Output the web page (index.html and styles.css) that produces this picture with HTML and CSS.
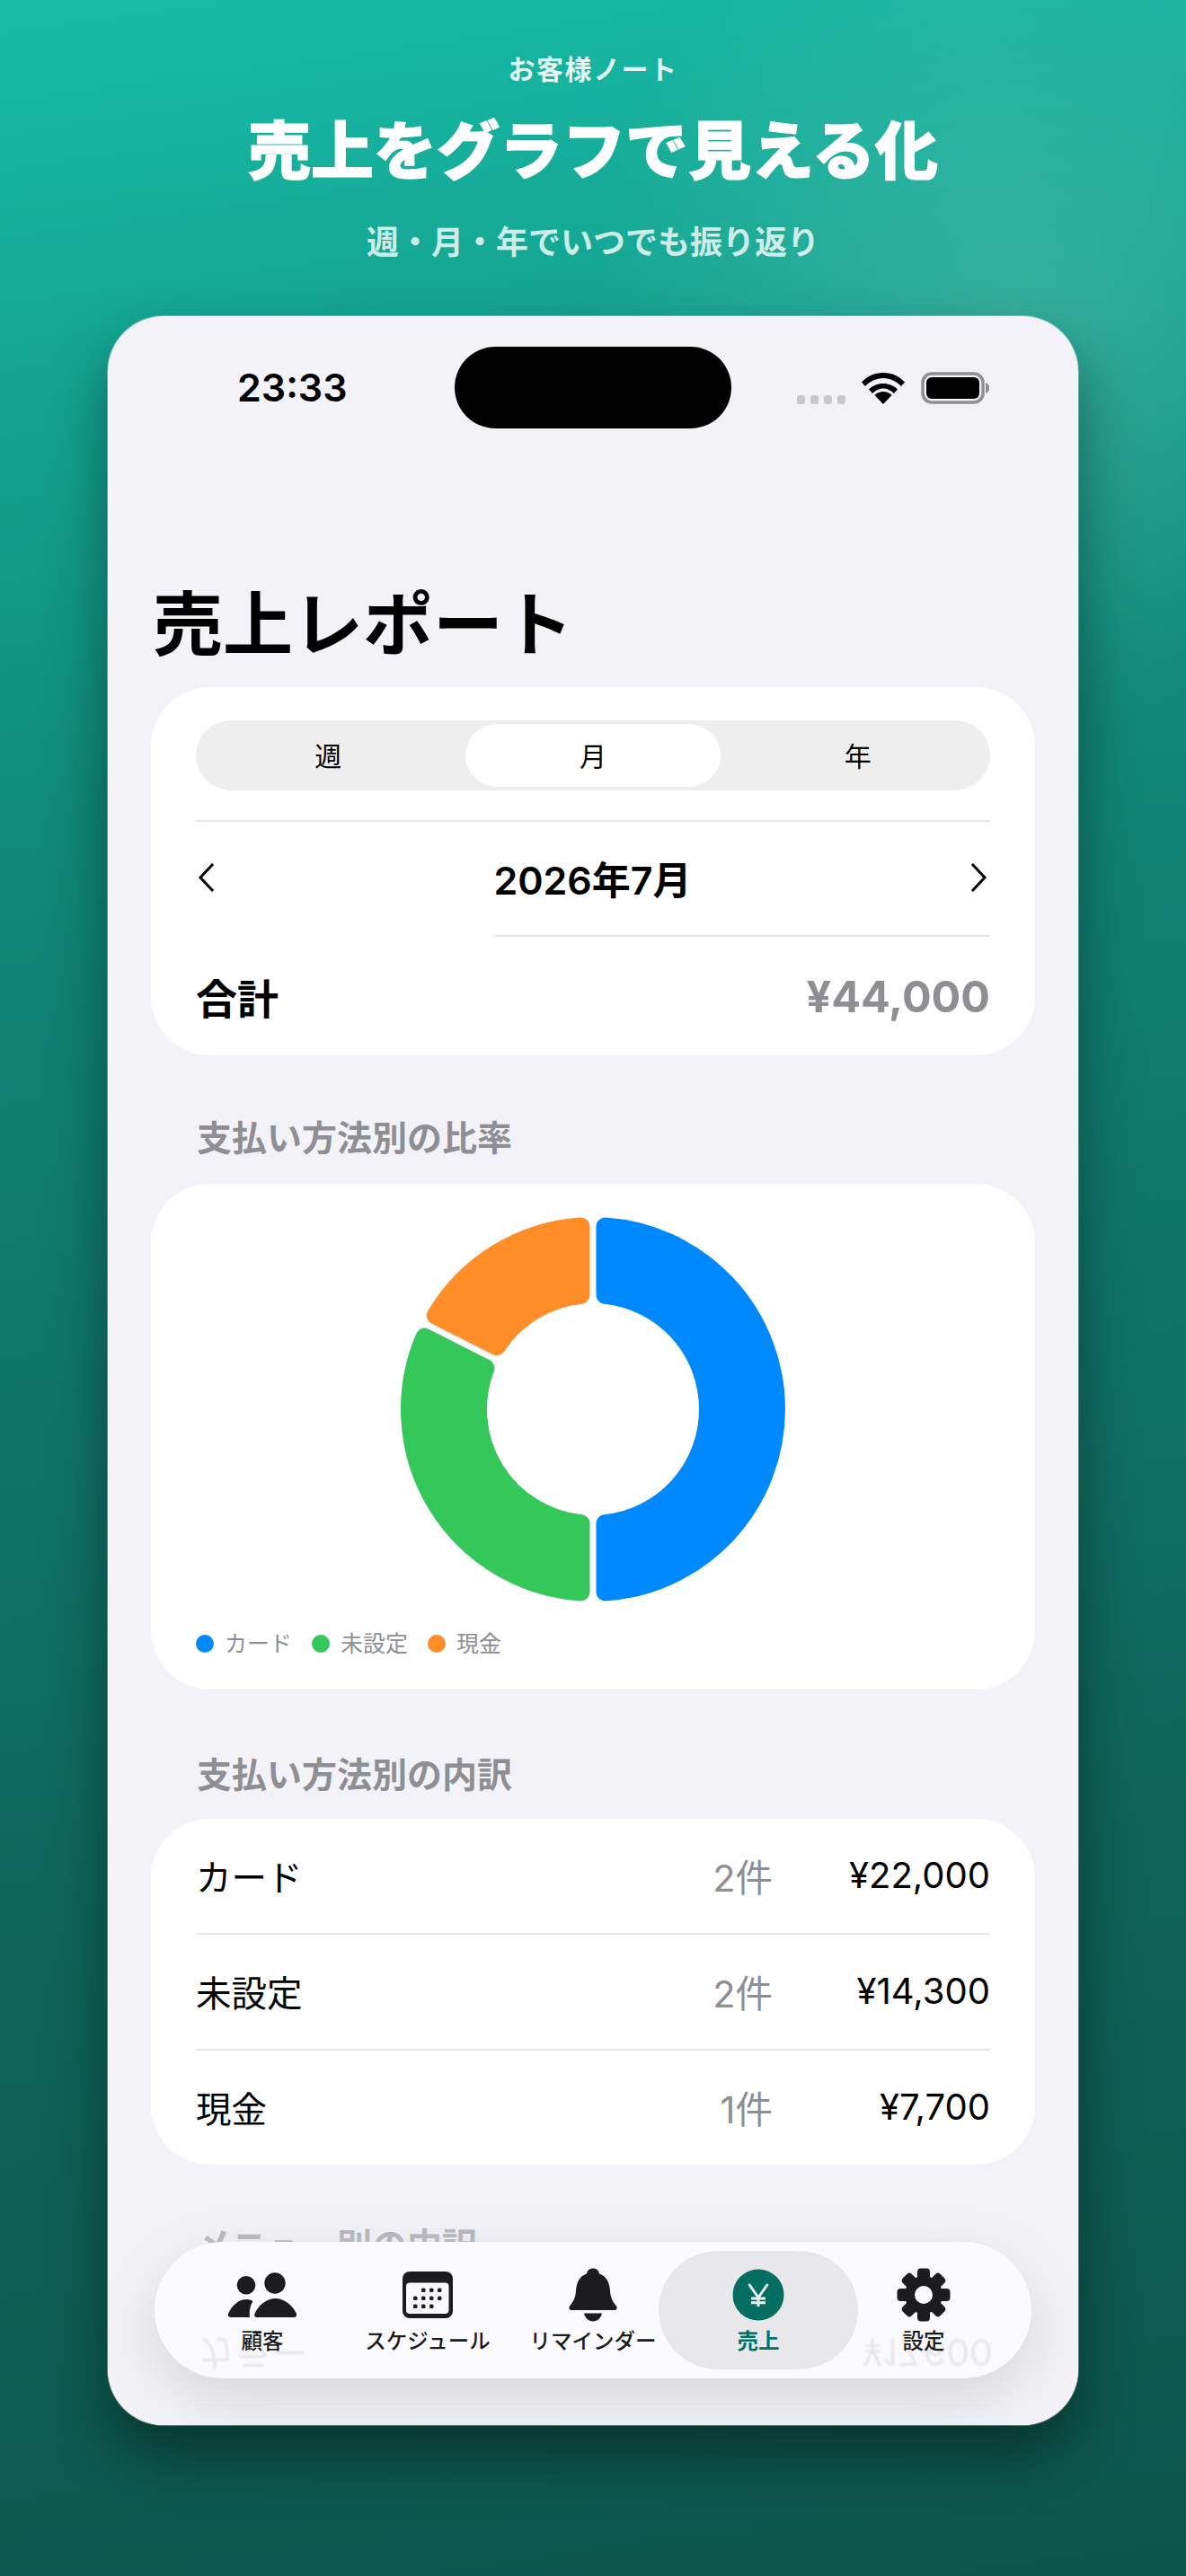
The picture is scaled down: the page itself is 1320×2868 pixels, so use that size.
FILE: index.html
```html
<!doctype html>
<html lang="ja">
<head>
	<meta charset="utf-8">
	<title>売上レポート</title>
	<link rel="stylesheet" href="styles.css">
</head>

<body>
	<div class="promo">
		<div class="promo-eyebrow">お客様ノート</div>
		<h1 class="promo-title">売上をグラフで見える化</h1>
		<div class="promo-sub">週・月・年でいつでも振り返り</div>
	</div>

	<div class="phone">
		<div class="status">
			<div class="status-time">23:33</div>
			<div class="island"></div>
			<div class="status-icons">
				<div class="signal"><i></i><i></i><i></i><i></i></div>
				<svg class="wifi" viewBox="0 0 48 35">
					<path d="M0 10.5C6 4 14.5 0 24 0S42 4 48 10.5L44 15C38.8 9.5 31.8 6 24 6S9.2 9.5 4 15Z"/>
					<path d="M8 18.5C12 14.5 17.7 12 24 12S36 14.5 40 18.5L36 23C33 20 28.7 17.5 24 17.5S15 20 12 23Z"/>
					<path d="M24 35L14.5 25C17 22.5 20.5 21 24 21S31 22.5 33.5 25Z"/>
				</svg>
				<svg class="battery" viewBox="0 0 76 36">
					<rect x="2" y="2" width="67" height="32" rx="10" fill="none" stroke="#8e8e93" stroke-width="3.5"/>
					<rect x="6" y="6" width="59" height="24" rx="6"/>
					<path d="M72 12C74.500 12.500 76 15 76 18S74.500 23.500 72 24Z" fill="#8e8e93"/>
				</svg>
			</div>
		</div>

		<div class="screen">
			<h2 class="page-title">売上レポート</h2>

			<div class="card card-range">
				<div class="segment">
					<div class="segment-item">週</div>
					<div class="segment-item segment-on">月</div>
					<div class="segment-item">年</div>
				</div>
				<div class="date-row">
					<svg class="chevron chevron-left" viewBox="0 0 19 34"><path d="M17 2L3 17L17 32"/></svg>
					<div class="date-label">2026年7月</div>
					<svg class="chevron chevron-right" viewBox="0 0 19 34"><path d="M2 2L16 17L2 32"/></svg>
				</div>
				<div class="inset-line"></div>
				<div class="total-row">
					<div class="total-label">合計</div>
					<div class="total-value">¥44,000</div>
				</div>
			</div>

			<div class="section-title">支払い方法別の比率</div>
			<div class="card card-chart">
				<svg class="donut" viewBox="0 0 428 428">
					<path class="seg-blue" d="M227.5 10.45A204 204 0 0 1 227.5 417.55L227.5 341.29A128 128 0 0 0 227.5 86.71Z"/>
					<path class="seg-green" d="M200.5 417.55A204 204 0 0 1 26.51 133.62L94.46 168.24A128 128 0 0 0 200.5 341.29Z"/>
					<path class="seg-orange" d="M38.77 109.56A204 204 0 0 1 200.5 10.45L200.5 86.71A128 128 0 0 0 106.72 144.18Z"/>
				</svg>
				<div class="legend">
					<div class="legend-item"><i class="dot dot-blue"></i>カード</div>
					<div class="legend-item"><i class="dot dot-green"></i>未設定</div>
					<div class="legend-item"><i class="dot dot-orange"></i>現金</div>
				</div>
			</div>

			<div class="section-title section-pay">支払い方法別の内訳</div>
			<div class="card card-list">
				<div class="row">
					<div class="row-name">カード</div>
					<div class="row-count">2件</div>
					<div class="row-amount">¥22,000</div>
				</div>
				<div class="row">
					<div class="row-name">未設定</div>
					<div class="row-count">2件</div>
					<div class="row-amount">¥14,300</div>
				</div>
				<div class="row">
					<div class="row-name">現金</div>
					<div class="row-count">1件</div>
					<div class="row-amount">¥7,700</div>
				</div>
			</div>

			<div class="section-title section-menu">メニュー別の内訳</div>
			<div class="card card-list">
				<div class="row"></div>
				<div class="row"></div>
			</div>
		</div>

		<div class="edge-fade"></div>

		<div class="tabbar">
			<div class="ghost">
				<span>カラー</span>
				<span>¥17,600</span>
			</div>
			<div class="tab">
				<svg class="tab-icon" width="78" height="50" viewBox="0 0 78 50">
					<circle cx="21" cy="14.300" r="10.300"/>
					<circle cx="53" cy="12" r="11.700"/>
					<path d="M4 50C1 50 0 47.500 1.500 45C6 36 13 30 21 30C23.500 30 26 30.600 28.500 32C25.500 37 24 43 25 50Z"/>
					<path d="M33 50C30 50 29.500 47.500 31 45C35 36 44 29 53.500 29C63 29 72 36 76.500 45C78 48 76.500 50 74 50Z"/>
				</svg>
				<div class="tab-label">顧客</div>
			</div>
			<div class="tab">
				<svg class="tab-icon" width="56" height="52" viewBox="0 0 56 52">
					<rect width="56" height="52" rx="8"/>
					<rect x="4" y="12.500" width="47.500" height="34.500" rx="4" fill="#fbfbfe"/>
					<g>
						<rect x="21" y="18.500" width="4.500" height="4.500" rx="1.500"/>
						<rect x="30" y="18.500" width="4.500" height="4.500" rx="1.500"/>
						<rect x="39" y="18.500" width="4.500" height="4.500" rx="1.500"/>
						<rect x="12" y="27.500" width="4.500" height="4.500" rx="1.500"/>
						<rect x="21" y="27.500" width="4.500" height="4.500" rx="1.500"/>
						<rect x="30" y="27.500" width="4.500" height="4.500" rx="1.500"/>
						<rect x="39" y="27.500" width="4.500" height="4.500" rx="1.500"/>
						<rect x="12" y="36.500" width="4.500" height="4.500" rx="1.500"/>
						<rect x="21" y="36.500" width="4.500" height="4.500" rx="1.500"/>
						<rect x="30" y="36.500" width="4.500" height="4.500" rx="1.500"/>
					</g>
				</svg>
				<div class="tab-label">スケジュール</div>
			</div>
			<div class="tab">
				<svg class="tab-icon" width="54" height="59" viewBox="0 0 54 59">
					<path d="M27 0C31 0 33.500 2.500 34 6C42 8.500 45.500 16 46 25C46.500 33 49 37 53 42C54.500 44 53.500 46.500 50.500 46.500L3.500 46.500C.5 46.500-.5 44 1 42C5 37 7.500 33 8 25C8.500 16 12 8.500 20 6C20.500 2.500 23 0 27 0Z"/>
					<path d="M17 50L37 50C36 55 32 59 27 59S18 55 17 50Z"/>
				</svg>
				<div class="tab-label">リマインダー</div>
			</div>
			<div class="tab tab-on">
				<svg class="tab-icon" width="58" height="58" viewBox="-29 -29 58 58">
					<circle r="28.500" fill="#056e63"/>
					<path class="yen" d="M-10.500-12L0 3L10.500-12M0 3L0 13M-8 4L8 4M-8 8.700L8 8.700"/>
				</svg>
				<div class="tab-label">売上</div>
			</div>
			<div class="tab">
				<svg class="tab-icon" width="60" height="60" viewBox="-30 -30 60 60">
					<circle class="gear-ring" r="15.500"/>
					<rect class="gear-tooth" x="-7" y="-29.500" width="14" height="14" rx="4"/>
					<rect class="gear-tooth" x="-7" y="-29.500" width="14" height="14" rx="4" transform="rotate(45)"/>
					<rect class="gear-tooth" x="-7" y="-29.500" width="14" height="14" rx="4" transform="rotate(90)"/>
					<rect class="gear-tooth" x="-7" y="-29.500" width="14" height="14" rx="4" transform="rotate(135)"/>
					<rect class="gear-tooth" x="-7" y="-29.500" width="14" height="14" rx="4" transform="rotate(180)"/>
					<rect class="gear-tooth" x="-7" y="-29.500" width="14" height="14" rx="4" transform="rotate(225)"/>
					<rect class="gear-tooth" x="-7" y="-29.500" width="14" height="14" rx="4" transform="rotate(270)"/>
					<rect class="gear-tooth" x="-7" y="-29.500" width="14" height="14" rx="4" transform="rotate(315)"/>
				</svg>
				<div class="tab-label">設定</div>
			</div>
		</div>
	</div>
</body>
</html>
```

FILE: styles.css
```css
*{ margin: 0; padding: 0; box-sizing: border-box; }

body{
	width: 1320px; height: 2868px; overflow: hidden;
	font-family: "Inter", "Noto Sans CJK JP", sans-serif;
	color: #000;
	background:
		radial-gradient(circle at 1130px 340px, rgba(255,255,255,.14), rgba(255,255,255,0) 480px),
		linear-gradient(172deg, #17bca6 0%, #14a592 14%, #0f8a7b 30%, #10786c 48%, #0e6459 72%, #0c554d 100%);
}

/* promo header */
.promo{
	height: 352px; padding-top: 57px; color: #fff;
	display: flex; flex-direction: column; align-items: center; }
.promo-eyebrow{
	font-size: 30px; line-height: 40px; font-weight: 700; letter-spacing: 1.5px;
	color: rgba(255,255,255,.88); }
.promo-title{
	margin-top: 22px; font-size: 70px; line-height: 100px; font-weight: 900;
	-webkit-text-stroke: 1.2px #fff; }
.promo-sub{
	margin-top: 26px; font-size: 36px; line-height: 50px; font-weight: 700;
	color: rgba(255,255,255,.78); }

/* phone */
.phone{
	position: relative; width: 1080px; height: 2348px; margin: 0 auto;
	background: #f2f2f7; border-radius: 62px; overflow: hidden;
	box-shadow: 0 0 0 1px rgba(255,255,255,.3), 0 34px 66px rgba(0,0,0,.42); }

.status{
	display: grid; grid-template-columns: 386px 308px 386px;
	padding-top: 34px; height: 125px; align-items: center; }
.status-time{ padding-left: 144px; font-size: 43px; font-weight: 600; line-height: 91px; }
.island{ height: 91px; background: #000; border-radius: 46px; }
.status-icons{ display: flex; align-items: flex-end; padding-left: 73px; }
.signal{ display: flex; gap: 6px; }
.signal i{ width: 9px; height: 10px; border-radius: 3px; background: #c7c7cc; }
.wifi{ width: 48px; height: 35px; margin-left: 18px; }
.battery{ width: 76px; height: 36px; margin-left: 18px; }

.screen{ padding: 0 48px; }
.page-title{
	margin-top: 169px; padding-left: 2px; font-size: 78px; line-height: 100px;
	font-weight: 700; margin-bottom: 19px; }

.card{ background: #fff; border-radius: 66px; padding: 0 50px; }

/* range card */
.card-range{ height: 410px; padding-top: 37px; }
.segment{
	display: grid; grid-template-columns: repeat(3, 1fr);
	height: 78px; padding: 4px 0; background: #eeeeef; border-radius: 39px; }
.segment-item{
	display: flex; align-items: center; justify-content: center; padding-bottom: 2px;
	font-size: 30px; font-weight: 400; margin: 0 5px; border-radius: 35px; }
.segment-on{ background: #fff; }
.date-row{
	display: flex; align-items: center; justify-content: space-between;
	height: 128px; margin-top: 33px; padding-bottom: 2px; border-top: 2px solid #e6e6e9; }
.chevron{ width: 19px; height: 34px; fill: none; stroke: #000; stroke-width: 3; }
.chevron-left{ margin-left: 2px; }
.chevron-right{ margin-right: 3px; }
.date-label{ font-size: 43px; font-weight: 600; }
.inset-line{ height: 2px; margin-left: 333px; background: #e6e6e9; }
.total-row{
	display: flex; align-items: center; justify-content: space-between;
	height: 132px; }
.total-label{ font-size: 46px; font-weight: 700; }
.total-value{ font-size: 48.500px; font-weight: 700; color: #8e8e93; }

.section-title{
	margin: 67px 0 26px; padding-left: 51px; height: 50px;
	font-size: 39px; line-height: 50px; font-weight: 700; color: #8e8e93; }
.section-pay{ margin-top: 70px; margin-bottom: 24px; }
.section-menu{ margin-top: 65px; margin-bottom: 24px; }

/* donut */
.card-chart{ height: 563px; padding-top: 37px; }
.donut{ display: block; width: 428px; height: 428px; margin: 0 auto; }
.donut path{ stroke-width: 20; stroke-linejoin: round; }
.seg-blue{ fill: #0088ff; stroke: #0088ff; }
.seg-green{ fill: #34c759; stroke: #34c759; }
.seg-orange{ fill: #ff8d28; stroke: #ff8d28; }
.legend{ display: flex; gap: 22px; margin-top: 32px; height: 30px; }
.legend-item{
	display: flex; align-items: center; gap: 12px;
	font-size: 25px; line-height: 30px; color: #8e8e93; }
.dot{ width: 20px; height: 20px; border-radius: 50%; }
.dot-blue{ background: #0088ff; }
.dot-green{ background: #34c759; }
.dot-orange{ background: #ff8d28; }

/* list */
.card-list{ padding-top: 0; }
.row{
	display: flex; align-items: center; height: 129px; padding-bottom: 2px;
	font-size: 39.500px; border-top: 2px solid #e6e6e9; }
.row:first-child{ height: 127px; border-top: none; }
.row-name{ flex: 1; }
.row-count{ font-size: 41.500px; color: #8e8e93; }
.row-amount{ width: 242px; font-size: 40px; text-align: right; }

/* things over the list */
.edge-fade{
	position: absolute; left: 0; right: 0; bottom: 0; height: 290px;
	background: linear-gradient(rgba(242,242,247,0), rgba(242,242,247,.45) 28%, rgba(242,242,247,.88) 50%); }

.tabbar{
	position: absolute; left: 52px; right: 52px; bottom: 52px; height: 152px;
	display: grid; grid-template-columns: repeat(5, 184px); padding: 29px 28px 0;
	background: #fbfbfe; border-radius: 76px;
	box-shadow: 0 24px 70px rgba(0,0,0,.12); }
.ghost{
	position: absolute; left: 48px; right: 43px; top: 102px;
	display: flex; justify-content: space-between;
	font-size: 41px; line-height: 42px; color: #000; opacity: .08;
	transform: scaleY(-1); filter: blur(1px); }
.tab{
	position: relative; display: flex; flex-direction: column; align-items: center; }
.tab-on::before{
	content: ""; position: absolute; left: -19px; right: -19px; top: -19px; bottom: 10px;
	background: #e8e8ea; border-radius: 66px; }
.tab-icon{ position: relative; display: block; height: 60px; fill: #1c1c1e; }
.tab-label{
	position: relative; margin-top: 7px; font-size: 23.500px; line-height: 30px;
	font-weight: 500; color: #1c1c1e; white-space: nowrap; }
.tab-on .tab-label{ color: #056e63; font-weight: 700; }
.yen{ fill: none; stroke: #e8f2f0; stroke-width: 3; }
.gear-ring{ fill: none; stroke: #1c1c1e; stroke-width: 11; }
.gear-tooth{ fill: #1c1c1e; }
```
